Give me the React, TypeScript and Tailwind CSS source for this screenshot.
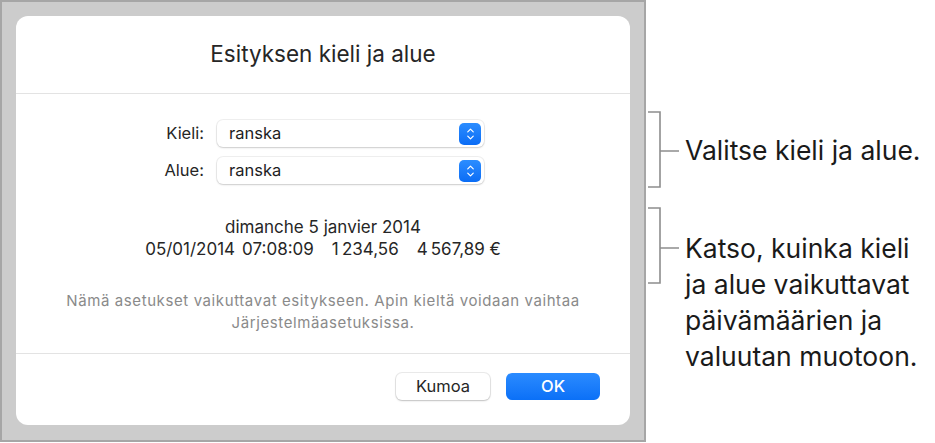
import { ChevronUp, ChevronDown } from "lucide-react";

const font = { fontFamily: "Inter, 'Noto Sans', sans-serif" };

function Stepper() {
  return (
    <div className="flex h-[22px] w-[22px] flex-col items-center justify-center rounded-[5px] bg-gradient-to-b from-[#2b8dff] to-[#0a6cf5] text-white">
      <ChevronUp size={11} strokeWidth={2.6} className="-mb-[2px]" />
      <ChevronDown size={11} strokeWidth={2.6} className="-mt-[2px]" />
    </div>
  );
}

function Popup({ value }: { value: string }) {
  return (
    <div className="flex h-[27px] w-[267px] items-center justify-between rounded-[6px] bg-white pl-[12px] pr-[3px] shadow-[0_0_0_1px_rgba(0,0,0,0.06),0_1px_2px_rgba(0,0,0,0.15)]">
      <span className="text-[16.5px] text-[#1d1d1f]">{value}</span>
      <Stepper />
    </div>
  );
}

function Bracket({ tickY }: { tickY: number }) {
  return (
    <svg width="31" height="77" viewBox="0 0 31 77" className="shrink-0">
      <path
        d={`M0 1 H12 V76 H0 M12 ${tickY} H31`}
        fill="none"
        stroke="#8d8d8d"
        strokeWidth="1.6"
      />
    </svg>
  );
}

export default function App() {
  return (
    <div className="flex h-[443px] w-[935px] bg-white" style={font}>
      {/* screenshot frame */}
      <div className="h-[442px] w-[646px] shrink-0 border-2 border-[#a6a6a6] bg-[#cccccc] pl-[14px] pt-[14px]">
        <div className="flex h-[409px] w-[614px] flex-col rounded-[12px] bg-white">
          <div className="flex h-[78px] items-center justify-center border-b border-[#e3e3e3] pb-[2px]">
            <h1 className="text-[22.5px] text-[#262626]">Esityksen kieli ja alue</h1>
          </div>

          <div className="flex h-[260px] flex-col border-b border-[#e3e3e3] pt-[26px]">
            <div className="grid grid-cols-[188px_267px] items-center gap-x-[13px] gap-y-[10px]">
              <span className="text-right text-[16.5px] text-[#262626]">Kieli:</span>
              <Popup value="ranska" />
              <span className="text-right text-[16.5px] text-[#262626]">Alue:</span>
              <Popup value="ranska" />
            </div>

            <div className="mt-[32px] flex flex-col items-center text-[17px] leading-[22px] text-[#262626]">
              <p>dimanche 5 janvier 2014</p>
              <p className="flex gap-[18px]">
                <span className="flex gap-[7px]">
                  <span>05/01/2014</span>
                  <span>07:08:09</span>
                </span>
                <span>1{"\u202F"}234,56</span>
                <span>4{"\u202F"}567,89{"\u00A0"}€</span>
              </p>
            </div>

            <div className="mt-[30px] text-center text-[15px] leading-[22px] tracking-[0.6px] text-[#8a8a8a]">
              <p>Nämä asetukset vaikuttavat esitykseen. Apin kieltä voidaan vaihtaa</p>
              <p>Järjestelmäasetuksissa.</p>
            </div>
          </div>

          <div className="flex flex-1 items-start justify-end gap-[16px] pr-[30px] pt-[19px]">
            <button className="h-[27px] w-[94px] rounded-[6px] bg-white text-[16.5px] text-[#262626] shadow-[0_0_0_1px_rgba(0,0,0,0.08),0_1px_2px_rgba(0,0,0,0.18)]">
              Kumoa
            </button>
            <button className="h-[27px] w-[94px] rounded-[6px] bg-gradient-to-b from-[#2a8bff] to-[#0a70f7] text-[16.5px] font-medium text-white">
              OK
            </button>
          </div>
        </div>
      </div>

      {/* annotations */}
      <div className="flex flex-col pl-[2px] pt-[111px] text-[26.5px] text-[#1a1a1a]">
        <div className="flex items-center">
          <Bracket tickY={40} />
          <span className="ml-[6px] leading-[36px]">Valitse kieli ja alue.</span>
        </div>
        <div className="mt-[19px] flex items-start">
          <Bracket tickY={41} />
          <div className="ml-[6px] mt-[23px] leading-[36px]">
            <p>Katso, kuinka kieli</p>
            <p>ja alue vaikuttavat</p>
            <p>päivämäärien ja</p>
            <p>valuutan muotoon.</p>
          </div>
        </div>
      </div>
    </div>
  );
}
